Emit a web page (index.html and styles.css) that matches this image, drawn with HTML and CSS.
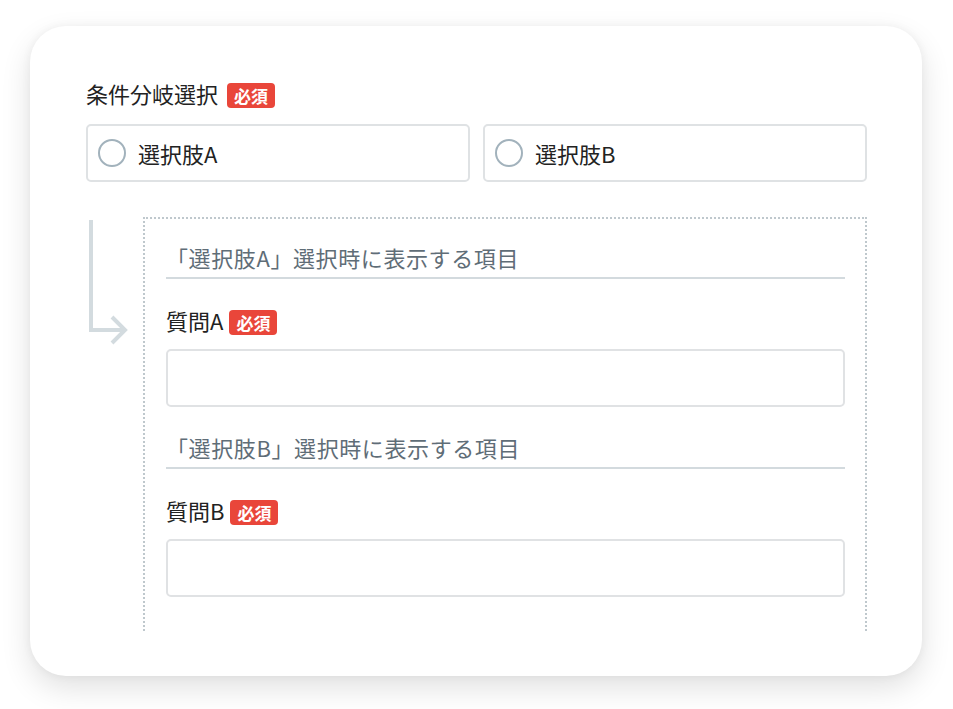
FILE: index.html
```html
<!DOCTYPE html>
<html lang="ja">
<head>
    <meta charset="UTF-8">
    <meta name="viewport" content="width=device-width, initial-scale=1.0">
    <title>条件分岐選択</title>
    <link rel="stylesheet" href="styles.css">
</head>
<body>
    <div class="card">
        <div class="label">条件分岐選択<span class="badge">必須</span></div>
        <div class="choices">
            <label class="choice"><span class="radio"></span>選択肢A</label>
            <label class="choice"><span class="radio"></span>選択肢B</label>
        </div>
        <div class="branch">
            <svg class="arrow" width="57" height="140" viewBox="0 0 57 140">
                <path d="M5 3 V113 H38" fill="none" stroke="#d3dbdf" stroke-width="4"/>
                <path d="M26 100 L39 113 L26 126" fill="none" stroke="#d3dbdf" stroke-width="4"/>
            </svg>
            <div class="sub">
                <div class="heading">「選択肢A」選択時に表示する項目</div>
                <div class="label q">質問A<span class="badge">必須</span></div>
                <div class="input"></div>
                <div class="heading next">「選択肢B」選択時に表示する項目</div>
                <div class="label q">質問B<span class="badge">必須</span></div>
                <div class="input"></div>
            </div>
        </div>
    </div>
</body>
</html>
```
FILE: styles.css
```css
body {
    margin: 0;
    padding: 26px 31px 34px 30px;
    background-color: #fff;
    font-family: "Noto Sans CJK JP", "Noto Sans", sans-serif;
    color: #222;
}
.card {
    background-color: #fff;
    border-radius: 36px;
    box-shadow: 0 12px 30px rgba(0, 0, 0, 0.12), 0 0 10px rgba(0, 0, 0, 0.05);
    padding: 52px 55px 45px 56px;
}
.label {
    display: flex;
    align-items: center;
    font-size: 22px;
    line-height: 30px;
    height: 30px;
}
.badge {
    display: inline-block;
    margin-left: 9px;
    width: 48px;
    height: 25px;
    line-height: 25px;
    text-align: center;
    font-size: 17px;
    font-weight: 700;
    color: #fff;
    background-color: #e9463a;
    border-radius: 4px;
    position: relative;
    top: 2px;
}
.q .badge {
    margin-left: 6px;
}
.choices {
    display: grid;
    grid-template-columns: 1fr 1fr;
    gap: 13px;
    margin-top: 16px;
}
.choice {
    display: flex;
    align-items: center;
    height: 58px;
    box-sizing: border-box;
    border: 2px solid #dfe2e4;
    border-radius: 5px;
    padding-left: 10px;
    font-size: 22px;
}
.radio {
    width: 28px;
    height: 28px;
    box-sizing: border-box;
    border: 2px solid #a2b2bc;
    border-radius: 50%;
    margin-right: 12px;
}
.branch {
    display: flex;
    margin-top: 35px;
}
.arrow {
    flex: none;
    display: block;
}
.sub {
    flex: 1;
    border: 2px dotted #bfc8cd;
    border-bottom: none;
    padding: 23px 20px 34px 21px;
}
.heading {
    font-size: 22px;
    line-height: 30px;
    letter-spacing: 0.6px;
    color: #5f6d77;
    padding-bottom: 5px;
    border-bottom: 2px solid #d3dade;
}
.heading.next {
    margin-top: 25px;
}
.q {
    margin-top: 26px;
}
.input {
    margin-top: 14px;
    height: 58px;
    box-sizing: border-box;
    border: 2px solid #e0e2e4;
    border-radius: 5px;
}
```
